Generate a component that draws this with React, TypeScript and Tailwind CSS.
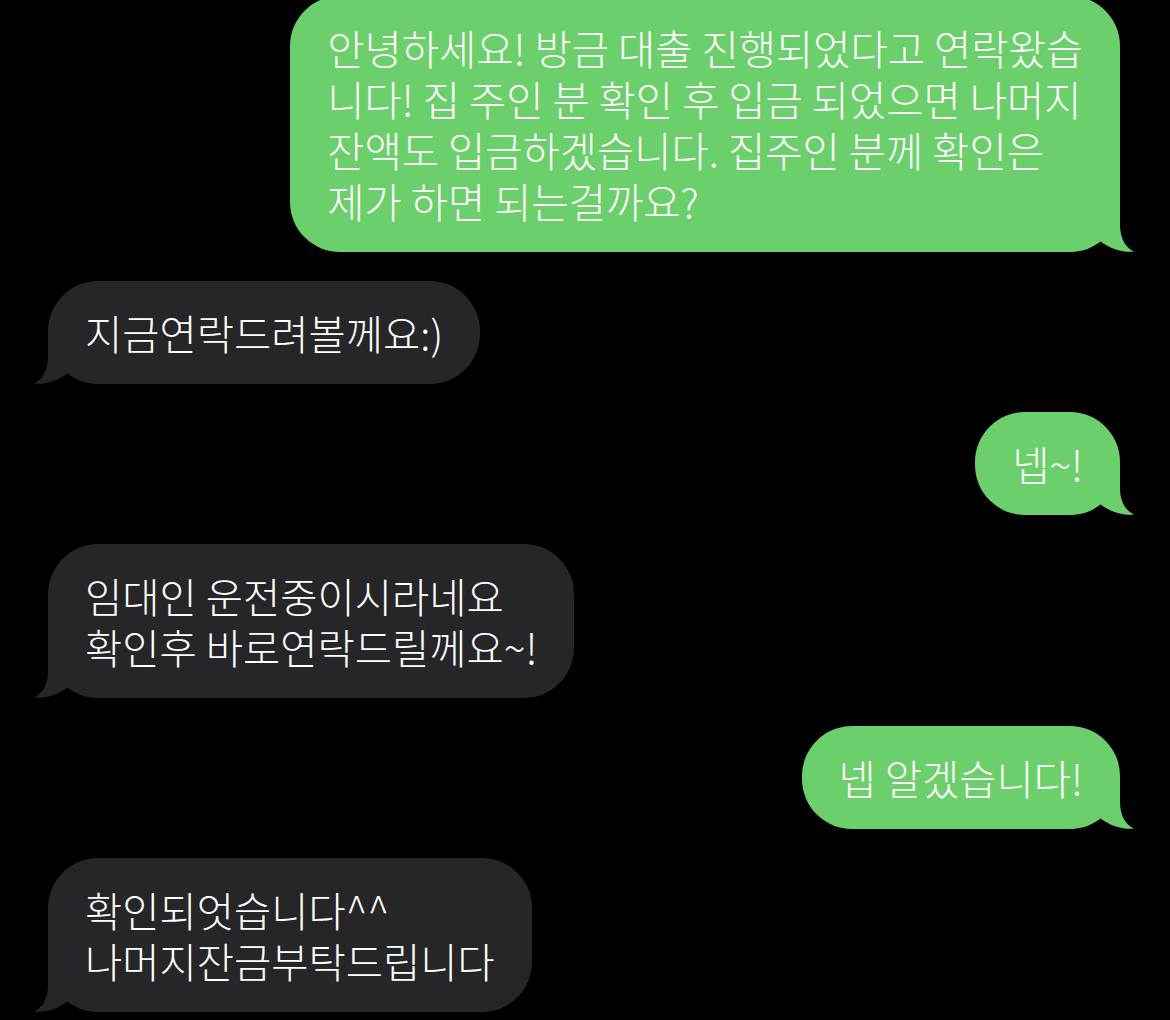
import React from 'react';

type Msg = { from: 'me' | 'them'; lines: string[] };

const messages: Msg[] = [
  {
    from: 'me',
    lines: [
      '안녕하세요! 방금 대출 진행되었다고 연락왔습',
      '니다! 집 주인 분 확인 후 입금 되었으면 나머지',
      '잔액도 입금하겠습니다. 집주인 분께 확인은',
      '제가 하면 되는걸까요?',
    ],
  },
  { from: 'them', lines: ['지금연락드려볼께요:)'] },
  { from: 'me', lines: ['넵~!'] },
  { from: 'them', lines: ['임대인 운전중이시라네요', '확인후 바로연락드릴께요~!'] },
  { from: 'me', lines: ['넵 알겠습니다!'] },
  { from: 'them', lines: ['확인되엇습니다^^', '나머지잔금부탁드립니다'] },
];

// bubble tail, drawn for the right side; mirrored for incoming messages
const Tail: React.FC<{ side: 'left' | 'right'; color: string }> = ({ side, color }) => (
  <svg
    width="40"
    height="51"
    viewBox="0 0 40 51"
    className={
      side === 'right'
        ? 'absolute -right-4 bottom-0 overflow-visible'
        : 'absolute -left-4 bottom-0 overflow-visible -scale-x-100'
    }
  >
    <path
      d="M4 40 L4 0 L24 0 L24 24 C24 38 30 47 38 50.5 C28 52 14 48 4 40 Z"
      fill={color}
    />
  </svg>
);

const Bubble: React.FC<{ msg: Msg; first?: boolean }> = ({ msg, first }) => {
  const mine = msg.from === 'me';
  const color = mine ? '#6bd06b' : '#262628';
  return (
    <div className={mine ? 'flex justify-end' : 'flex justify-start'}>
      <div
        className={
          'relative rounded-[50px] px-[37px] py-[26px] text-white ' +
          (mine ? 'bg-[#6bd06b]' : 'bg-[#262628]') +
          (first ? ' -mt-1' : '')
        }
      >
        <Tail side={mine ? 'right' : 'left'} color={color} />
        <div className="relative">
          {msg.lines.map((l, i) => (
            <div key={i} className="whitespace-nowrap text-[40.5px] font-light leading-[51px]">
              {l}
            </div>
          ))}
        </div>
      </div>
    </div>
  );
};

export default function App() {
  return (
    <div
      className="min-h-[1020px] w-[1170px] overflow-hidden bg-black pl-[48px] pr-[50px]"
      style={{ fontFamily: '"Noto Sans CJK KR", "Noto Sans", sans-serif' }}
    >
      <div className="flex flex-col gap-[28.5px]">
        {messages.map((m, i) => (
          <Bubble key={i} msg={m} first={i === 0} />
        ))}
      </div>
    </div>
  );
}
